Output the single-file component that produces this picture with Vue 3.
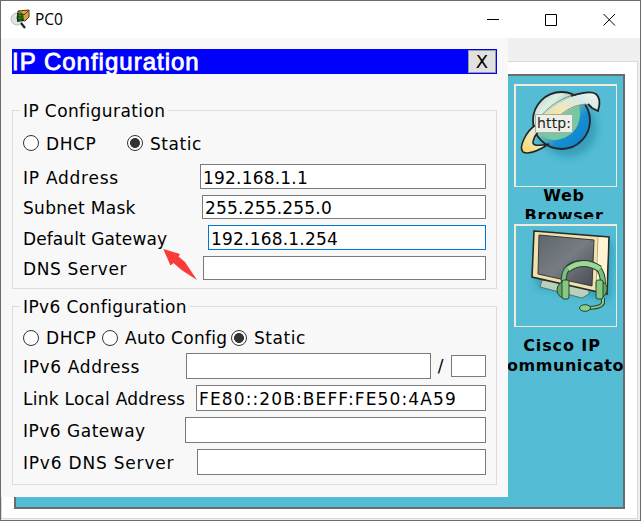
<script setup>
import { ref } from 'vue';

const ipMode = ref('static');
const ipv6Mode = ref('static');

const ipFields = ref([
  { id: 'ip', label: 'IP Address', value: '192.168.1.1', width: 286, height: 25, spacing: 0.75 },
  { id: 'mask', label: 'Subnet Mask', value: '255.255.255.0', width: 284, height: 24, spacing: 0.3 },
  { id: 'gateway', label: 'Default Gateway', value: '192.168.1.254', width: 278, height: 25, spacing: 0.1 },
  { id: 'dns', label: 'DNS Server', value: '', width: 283, height: 24, spacing: 0.65 },
]);

const ipv6Fields = ref([
  { id: 'link', label: 'Link Local Address', value: 'FE80::20B:BEFF:FE50:4A59', width: 290, spacing: 0.27 },
  { id: 'gateway6', label: 'IPv6 Gateway', value: '', width: 301, spacing: 0.5 },
  { id: 'dns6', label: 'IPv6 DNS Server', value: '', width: 289, spacing: 0.8 },
]);

const ipv6Address = ref('');
const ipv6Prefix = ref('');
</script>

<template>
  <div class="window">
    <header class="titlebar">
      <svg class="app-icon" width="22" height="22" viewBox="0 0 22 22">
        <circle cx="7" cy="10" r="6" fill="#e2e2de" stroke="#bcbcb8" />
        <path d="M8 2 19 1 19 8 15 12 7 10Z" fill="#d9a345" stroke="#4e3516" />
        <path d="M8 2 14 6 19 1" fill="none" stroke="#5f431c" />
        <path d="M7 4 13 5 14 12 7 13Z" fill="#153e13" />
        <path d="M8 6 13 7M8 9 13 9M10 5V12" stroke="#36a42c" stroke-width=".7" />
        <path d="m11 14 4 5" stroke="#222" stroke-width="2.2" />
      </svg>
      <span class="window-title">PC0</span>
      <div class="controls">
        <svg width="12" height="13" viewBox="0 0 12 13"><path d="M0 6.5H12" /></svg>
        <svg width="12" height="13" viewBox="0 0 12 13"><path d="M.5 1.5H11.5V12.5H.5Z" /></svg>
        <svg width="13" height="13" viewBox="0 0 13 13"><path d="m.5 1 11.5 11.5M12 1 .5 12.5" /></svg>
      </div>
    </header>

    <main class="pane">
      <div class="desktop">
        <div class="apps">
          <div class="app">
            <div class="app-picture">
              <svg width="100" height="100" viewBox="0 0 100 100">
                <defs>
                  <linearGradient id="globe" x1="0" y1="0" x2="1" y2="1">
                    <stop offset="0" stop-color="#9cceb6" />
                    <stop offset=".25" stop-color="#e0efe4" />
                    <stop offset=".45" stop-color="#75c4ae" />
                    <stop offset=".65" stop-color="#168fd0" />
                    <stop offset="1" stop-color="#0d7ecb" />
                  </linearGradient>
                  <linearGradient id="orbit" x1="0" y1="1" x2="1" y2="0">
                    <stop offset="0" stop-color="#ffd45a" />
                    <stop offset=".5" stop-color="#efe9bd" />
                    <stop offset=".75" stop-color="#d7e9e6" />
                    <stop offset="1" stop-color="#f4f6f4" />
                  </linearGradient>
                  <filter id="soft" x="-30%" y="-30%" width="160%" height="160%">
                    <feGaussianBlur stdDeviation="4" />
                  </filter>
                </defs>
                <circle cx="52" cy="42" r="29" fill="#177f9f" opacity=".5" filter="url(#soft)" />
                <circle cx="45.5" cy="34.5" r="28.5" fill="url(#globe)" stroke="#252525" stroke-width="1.8" />
                <path d="M63 19Q68 43 48 52Q35 57 27 50L22 44 58 20Z" fill="#77c7a1" />
                <path d="M20 40C34 20 54 8 77 6Q85 8 82 25L76 22Q76 18 70 18C54 20 42 30 30 46Z" fill="url(#orbit)" />
                <path d="M25 30C38 15 54 9 62 8M70 18C58 19 50 24 42 31" fill="none" stroke="#8b8d83" />
                <path d="M55 10Q74 4 80 8Q86 13 82 25L76 22L72 18" fill="none" stroke="#252525" stroke-width="1.8" />
                <path d="M20 39C11 44 2 61 7 66Q14 70 33 58Q18 61 17 57Q17 52 22 46Z" fill="url(#orbit)" stroke="#252525" stroke-width="1.6" />
                <path d="M19.5 28.500H56.500V46.500H19.500Z" fill="#edf0e9" stroke="#a9aea5" />
                <text x="21" y="42" textLength="34">http:</text>
              </svg>
            </div>
            <div class="app-name">Web<br />Browser</div>
          </div>

          <div class="app communicator">
            <div class="app-picture">
              <svg width="100" height="100" viewBox="0 0 100 100">
                <defs>
                  <linearGradient id="screen" x1="0" y1="0" x2="1" y2="1">
                    <stop offset="0" stop-color="#5e666d" />
                    <stop offset=".5" stop-color="#777c82" />
                    <stop offset="1" stop-color="#454c52" />
                  </linearGradient>
                </defs>
                <path d="M22 10 97 17 94 74 20 61Z" fill="#17809f" opacity=".5" filter="url(#soft)" />
                <path d="M26 54 24 61 66 72 73 68V60Z" fill="#b9d0bb" stroke="#487876" />
                <path d="M18 5 93 11 91 68 16 51Z" fill="#f0e0ae" stroke="#292b25" stroke-width="1.6" />
                <path d="M81 11 92 12 90 66 79 64Z" fill="#fff5d4" />
                <path d="M23 9 78 14 76 60 22 48Z" fill="url(#screen)" stroke="#34393a" />
                <path d="M82 11 80 62" stroke="#b99f68" />
                <path d="M48 59C46 42 55 37 67 37S87 42 87 58" fill="none" stroke="#24462f" stroke-width="6" />
                <path d="M48 59C46 42 55 37 67 37S87 42 87 58" fill="none" stroke="#7bbd80" stroke-width="4" />
                <path d="M52 43Q67 32 84 43" fill="none" stroke="#24462f" stroke-width="7" />
                <path d="M52 43Q67 32 84 43" fill="none" stroke="#a0d798" stroke-width="5" />
                <path d="M87 72V77Q85 82 71 82" fill="none" stroke="#24462f" stroke-width="4" />
                <path d="M87 72V77Q85 82 71 82" fill="none" stroke="#8bc98a" stroke-width="2" />
                <path d="M50 54Q41 57 41 64T50 73Z" fill="#62a968" stroke="#24462f" />
                <path d="M84 54Q92 58 91 64T84 73Z" fill="#62a968" stroke="#24462f" />
                <rect x="46" y="54" width="7" height="19" rx="2" fill="#87c982" stroke="#24462f" />
                <rect x="80" y="54" width="7" height="19" rx="2" fill="#87c982" stroke="#24462f" />
                <ellipse cx="69" cy="82" rx="5.5" ry="3.3" fill="#8bcf88" stroke="#24462f" />
              </svg>
            </div>
            <div class="app-name"><span>Cisco IP</span><span class="wide-name">ommunicato</span></div>
          </div>
        </div>
      </div>
    </main>

    <section class="dialog">
      <div class="dialog-title">
        <h1>IP Configuration</h1>
        <button class="close">X</button>
      </div>

      <div class="group group-ip">
        <h2 class="legend">IP Configuration</h2>
        <div class="radios radios-ip">
          <label class="option"><input v-model="ipMode" type="radio" value="dhcp" /><span>DHCP</span></label>
          <label class="option"><input v-model="ipMode" type="radio" value="static" /><span>Static</span></label>
        </div>
        <div class="rows">
          <div v-for="field in ipFields" :key="field.id" class="row">
            <label :for="field.id" :style="{ letterSpacing: field.spacing + 'px' }">{{ field.label }}</label>
            <input
              :id="field.id"
              v-model="field.value"
              class="text-input"
              :class="{ active: field.id === 'gateway' }"
              :style="{ width: field.width + 'px', height: field.height + 'px' }"
            />
          </div>
        </div>
      </div>

      <div class="group group-ipv6">
        <h2 class="legend">IPv6 Configuration</h2>
        <div class="radios radios-ipv6">
          <label class="option"><input v-model="ipv6Mode" type="radio" value="dhcp" /><span>DHCP</span></label>
          <label class="option"><input v-model="ipv6Mode" type="radio" value="auto" /><span>Auto Config</span></label>
          <label class="option"><input v-model="ipv6Mode" type="radio" value="static" /><span>Static</span></label>
        </div>
        <div class="rows">
          <div class="row">
            <label for="ip6">IPv6 Address</label>
            <div class="address">
              <input id="ip6" v-model="ipv6Address" class="text-input" />
              <span>/</span>
              <input v-model="ipv6Prefix" class="text-input prefix" />
            </div>
          </div>
          <div v-for="field in ipv6Fields" :key="field.id" class="row">
            <label :for="field.id" :style="{ letterSpacing: field.spacing + 'px' }">{{ field.label }}</label>
            <input :id="field.id" v-model="field.value" class="text-input" :style="{ width: field.width + 'px' }" />
          </div>
        </div>
      </div>

      <svg class="pointer" width="36" height="34" viewBox="0 0 36 34">
        <path d="M1.300 1 18 6 16.500 8.500 23 14 35 32 19.500 22 11.500 15 8.500 17.500Z" fill="#fb3b38" />
      </svg>
    </section>
  </div>
</template>

<style>
body {
  margin: 0;
  overflow: hidden;
}
</style>

<style scoped>
* {
  box-sizing: border-box;
}

.window {
  position: relative;
  display: flex;
  flex-direction: column;
  width: 641px;
  height: 521px;
  border: 1px solid #6b6b6b;
  background: #f0f0f0;
  color: #000;
  font-family: "DejaVu Sans", Verdana, sans-serif;
  font-size: 17px;
  overflow: hidden;
}

.titlebar {
  display: flex;
  align-items: center;
  height: 37px;
  padding-left: 9px;
  background: #fff;
}

.window-title {
  margin: -2px 0 0 3px;
  font-family: "Open Sans", "Noto Sans", sans-serif;
  font-size: 15.5px;
  letter-spacing: -0.1px;
}

.controls {
  display: flex;
  gap: 46px;
  margin: -1px 24px 0 auto;
}

.controls path {
  fill: none;
  stroke: #000;
}

.pane {
  flex: 1;
  margin: 23px 2px 1px 0;
  padding: 12px 12px 9px 12px;
  border: 1px solid #d9d9d9;
  background: #fff;
}

.desktop {
  display: flex;
  justify-content: flex-end;
  height: 100%;
  border: 2px solid #6b6b6b;
  background: #54bdd5;
}

.apps {
  width: 115px;
  padding-top: 8px;
  overflow: hidden;
}

.app {
  display: flex;
  flex-direction: column;
  align-items: center;
  height: 140px;
}

.app-picture {
  width: 103px;
  height: 103px;
  border: 1px solid #f1ead8;
  border-width: 2px 1px 1px 2px;
}

.app-picture svg {
  display: block;
}

.app-picture text {
  font-family: "DejaVu Sans", sans-serif;
  font-size: 14px;
  fill: #222;
}

.app-name {
  height: 33px;
  margin: -1px 3px 0 0;
  overflow: hidden;
  font-size: 16px;
  font-weight: bold;
  line-height: 20px;
  letter-spacing: 0.7px;
  text-align: center;
}

.communicator .app-name {
  display: flex;
  flex-direction: column;
  align-items: center;
  height: 40px;
  margin: 9px 0 0;
  overflow: visible;
  white-space: nowrap;
}

.communicator .app-name span {
  margin-right: 7px;
  letter-spacing: 0.9px;
}

.communicator .app-name .wide-name {
  margin-right: 0;
  letter-spacing: 0.55px;
}

.dialog {
  position: absolute;
  left: 0;
  top: 37px;
  width: 507px;
  height: 459px;
  padding: 11px 11px 0;
  background: #f8f8f8;
}

.dialog-title {
  display: flex;
  justify-content: space-between;
  height: 25px;
  background: #00f;
  overflow: hidden;
}

.dialog-title h1 {
  margin: 0;
  color: #fff;
  font: 24px/25px "Liberation Sans", Arial, sans-serif;
  letter-spacing: 1px;
  -webkit-text-stroke: 0.8px #fff;
}

.close {
  width: 28px;
  height: 23px;
  margin: 1px 1px 0 0;
  padding: 0;
  border: 1px solid #999;
  background: #e1e1e1;
  color: #000;
  font: 18px/20px "DejaVu Sans", Verdana, sans-serif;
}

.group {
  width: 485px;
  height: 179px;
  border: 1px solid #dcdcdc;
}

.group-ip {
  margin-top: 36px;
}

.group-ipv6 {
  margin-top: 17px;
}

.legend {
  width: max-content;
  height: 20px;
  margin: -10px 0 0 7px;
  padding: 0 3px;
  background: #f8f8f8;
  font-size: 17px;
  font-weight: normal;
  line-height: 20px;
  letter-spacing: 0.4px;
}

.radios {
  display: flex;
  height: 24px;
  margin: 10px 0 0 10px;
  white-space: nowrap;
}

.radios-ipv6 {
  margin-top: 9px;
}

.option {
  display: flex;
  align-items: center;
  letter-spacing: 0.55px;
}

.radios-ip .option span {
  margin-top: 1px;
}

.option input {
  appearance: none;
  flex: none;
  width: 16px;
  height: 16px;
  margin: 0 7px 0 0;
  border: 1px solid #333;
  border-radius: 50%;
  background: #fff;
}

.option input:checked {
  background: radial-gradient(circle, #333 4.6px, #fff 5.3px);
}

.radios-ip .option:first-child {
  width: 104px;
}

.radios-ipv6 .option:first-child {
  width: 79px;
}

.radios-ipv6 .option:nth-child(2) {
  width: 129px;
  letter-spacing: 0.25px;
}

.rows {
  display: flex;
  flex-direction: column;
  gap: 6px;
  margin: 9px 10px 0;
}

.group-ipv6 .rows {
  margin-top: 3px;
}

.row {
  display: flex;
  align-items: center;
  justify-content: space-between;
  white-space: nowrap;
  letter-spacing: 0.65px;
}

.row > label {
  padding-top: 2px;
}

.text-input {
  height: 26px;
  padding: 2px 2px 0;
  border: 1px solid #7a7a7a;
  outline: none;
  background: #fff;
  color: #000;
  font: 17px "DejaVu Sans", Verdana, sans-serif;
  letter-spacing: 0.2px;
}

.text-input.active {
  border-color: #0078d7;
}

#link {
  letter-spacing: 1.12px;
}

.address {
  display: flex;
  align-items: center;
  justify-content: space-between;
  width: 300px;
}

.address .text-input {
  width: 245px;
}

.address .prefix {
  width: 35px;
  height: 22px;
}

.pointer {
  position: absolute;
  left: 161px;
  top: 210px;
}
</style>
